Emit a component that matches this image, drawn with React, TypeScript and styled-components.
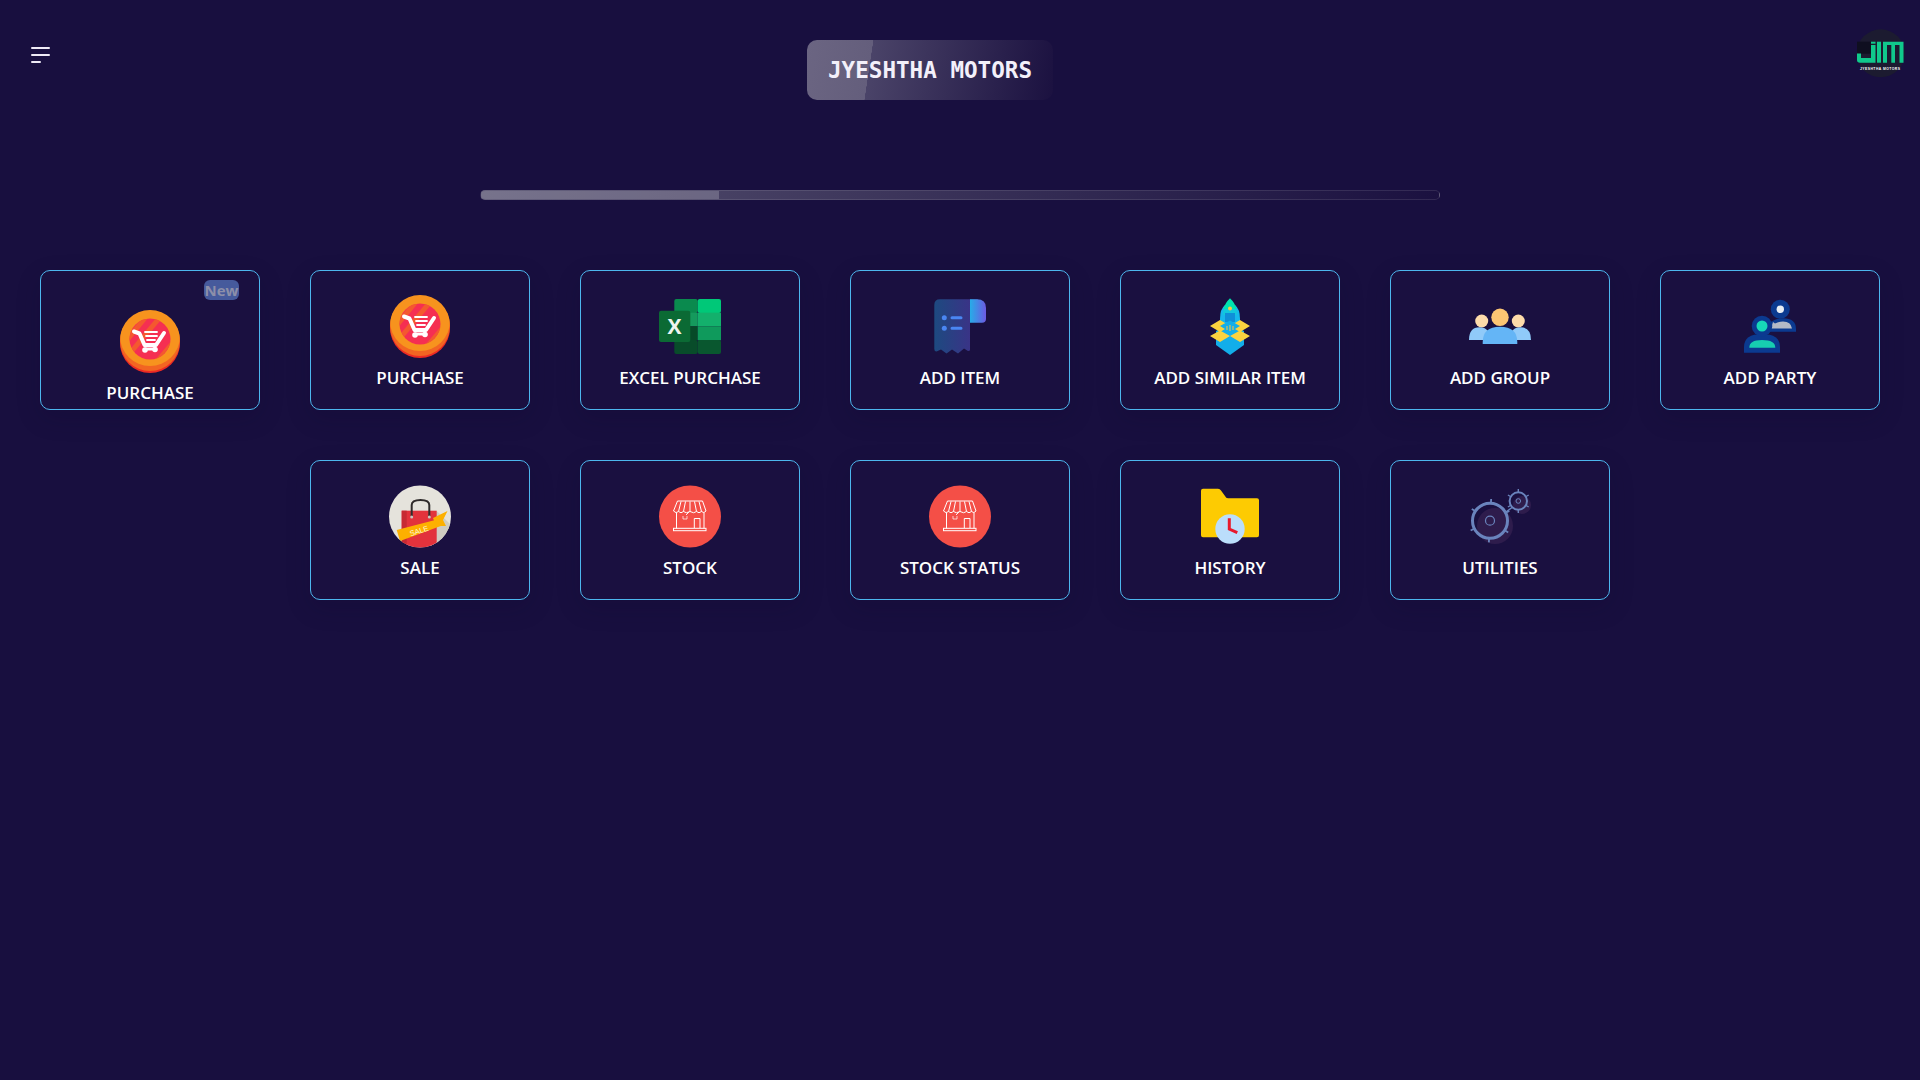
import React from "react";
import styled, { createGlobalStyle } from "styled-components";

const GlobalStyle = createGlobalStyle`
  html, body {
    margin: 0;
    padding: 0;
    background: #180f3f;
  }
  * {
    box-sizing: border-box;
  }
`;

const Page = styled.div`
  width: 100%;
  min-height: 1080px;
  background: #180f3f;
  font-family: "Open Sans", "Noto Sans", sans-serif;
  overflow: hidden;
`;

const Header = styled.header`
  display: flex;
  align-items: flex-start;
  height: 100px;
  padding: 27px 14px 0 31px;
`;

const MenuButton = styled.button`
  display: flex;
  flex-direction: column;
  gap: 5px;
  width: 19px;
  margin-top: 20px;
  padding: 0;
  border: 0;
  background: none;
`;

const MenuLine = styled.span<{ $short?: boolean }>`
  display: block;
  height: 2px;
  width: ${({ $short }) => ($short ? "10px" : "19px")};
  background: #eeeaf6;
  border-radius: 1px;
`;

const Title = styled.h1`
  width: 246px;
  height: 60px;
  margin: 13px 0 0 757px;
  border-radius: 10px;
  background: linear-gradient(98.5deg, #6b6582 0, #645e7c 26%, #4a4368 26.1%, #1b1140 100%);
  color: #f3f0fa;
  font-family: "DejaVu Sans Mono", "Liberation Mono", monospace;
  font-size: 22.6px;
  font-weight: 700;
  line-height: 60px;
  text-align: center;
`;

const LogoWrap = styled.div`
  margin-left: auto;
  width: 50px;
  height: 52px;
`;

const ProgressTrack = styled.div`
  width: 960px;
  height: 10px;
  margin: 90px auto 0;
  border: 1px solid rgba(255, 255, 255, 0.1);
  border-radius: 5px;
  background: linear-gradient(90deg, #55506f 0, #1b1140 100%);
  overflow: hidden;
`;

const ProgressFill = styled.div<{ $value: number }>`
  width: ${({ $value }) => $value}%;
  height: 100%;
  background: rgba(255, 255, 255, 0.2);
`;

const Tiles = styled.main`
  display: flex;
  flex-direction: column;
  gap: 50px;
  margin-top: 70px;
`;

const TileRow = styled.div`
  display: flex;
  justify-content: center;
  gap: 50px;
`;

const Tile = styled.a<{ $badged?: boolean }>`
  position: relative;
  display: flex;
  flex-direction: column;
  align-items: center;
  width: 220px;
  height: 140px;
  padding-top: ${({ $badged }) => ($badged ? "39px" : "24px")};
  border: 1px solid #4db7ee;
  border-radius: 10px;
  background: #1a1040;
  box-shadow: 0 8px 24px rgba(14, 8, 44, 0.18);
`;

const IconBox = styled.div`
  width: 62px;
  height: 63px;
  svg {
    display: block;
  }
`;

const TileLabel = styled.span`
  margin-top: 8px;
  color: #fff;
  font-size: 17px;
  font-weight: 600;
  line-height: 24px;
  white-space: nowrap;
`;

const NewBadge = styled.span`
  position: absolute;
  top: 9px;
  right: 20px;
  width: 35px;
  height: 20px;
  border-radius: 6px;
  background: #465a9c;
  color: #8d8fa9;
  font-size: 15px;
  font-weight: 700;
  line-height: 20px;
  text-align: center;
`;

const Svg = ({ children }: { children: React.ReactNode }) => (
  <svg width="62" height="63" viewBox="0 0 62 63">
    {children}
  </svg>
);

const CartIcon = () => (
  <Svg>
    <circle cx="31" cy="33" r="30" fill="#ed2a24" />
    <ellipse cx="31" cy="31" rx="30" ry="30" fill="#f26522" />
    <clipPath id="cartClip">
      <circle cx="31" cy="30" r="30" />
    </clipPath>
    <circle cx="31" cy="26" r="30" fill="#f7931e" clipPath="url(#cartClip)" />
    <clipPath id="cartInner">
      <circle cx="31" cy="29" r="20.5" />
    </clipPath>
    <circle cx="31" cy="29" r="20.5" fill="#f52f52" />
    <g clipPath="url(#cartInner)" stroke="#f4582f" strokeWidth="5">
      <path d="M8 30 L26 8 M12 42 L42 6" />
      <path d="M36 54 L58 28" />
    </g>
    <g fill="none" stroke="#fff" strokeLinecap="round" strokeLinejoin="round">
      <path d="M15 21.500 L20.500 23.500 L25.500 35 H37 L45 23" strokeWidth="4" />
      <path d="M26 22 H38" strokeWidth="1.800" />
      <path d="M27 26 H38" strokeWidth="1.800" />
      <path d="M28 30 H36" strokeWidth="1.800" />
      <path d="M26 39 H36" strokeWidth="3" />
    </g>
    <circle cx="26" cy="40" r="2.800" fill="#fff" />
    <circle cx="36" cy="39.500" r="2.800" fill="#fff" />
  </Svg>
);

const ExcelIcon = () => (
  <Svg>
    <g transform="translate(0 4)">
      <rect x="15.3" y="0" width="23.4" height="14" rx="2" fill="#0a8a4e" />
      <rect x="38.7" y="0" width="23.3" height="14" rx="2" fill="#00c878" />
      <rect x="15.3" y="13.7" width="23.4" height="13.6" fill="#159a5d" />
      <rect x="38.7" y="13.7" width="23.3" height="13.6" fill="#13b06c" />
      <rect x="15.3" y="27.3" width="23.4" height="14" fill="#064a28" />
      <rect x="38.7" y="27.3" width="23.3" height="14" fill="#0f9a5c" />
      <rect x="15.3" y="41" width="23.4" height="14" rx="2" fill="#084c2a" />
      <rect x="38.7" y="41" width="23.3" height="14" rx="2" fill="#09572f" />
      <rect x="0" y="11.7" width="31.3" height="31.3" rx="2" fill="#0b6a34" />
      <text x="15.6" y="35" fill="#eef5ef" fontFamily="Open Sans, sans-serif" fontSize="21" fontWeight="700" textAnchor="middle">
        X
      </text>
    </g>
  </Svg>
);

const ReceiptIcon = () => (
  <Svg>
    <defs>
      <linearGradient id="receiptBody" x1="0" x2="1" y1="0" y2="0">
        <stop offset="0" stopColor="#1d4a80" />
        <stop offset="1" stopColor="#402e88" />
      </linearGradient>
      <linearGradient id="receiptRoll" x1="0" x2="1" y1="0" y2="0">
        <stop offset="0" stopColor="#27ace8" />
        <stop offset="1" stopColor="#6c5ae2" />
      </linearGradient>
    </defs>
    <path
      d="M11 4.300 H49 V24 H41 V55 Q41 56 39 56 L35 53.500 L29 58.500 L23 54.500 L17.500 58.500 L12 54.500 L7.500 56.500 Q5.300 56.500 5.300 54 V10 Q5.300 4.300 11 4.300 Z"
      fill="url(#receiptBody)"
    />
    <path d="M41 4.300 H48 Q57 4.300 57 13 V24 Q57 27.700 53 27.700 H41 Z" fill="url(#receiptRoll)" />
    <circle cx="15.300" cy="22.700" r="2.500" fill="#4a86f2" />
    <circle cx="15.300" cy="33.300" r="2.500" fill="#4a86f2" />
    <path d="M23 22.700 H32 M23 33.300 H32" stroke="#4a86f2" strokeWidth="3" strokeLinecap="round" />
  </Svg>
);

const RocketBoxIcon = () => (
  <Svg>
    <path d="M17 36 L31 28 L45 36 V50 L31 60 L17 50 Z" fill="#12aeea" />
    <path d="M21 24 Q21 14 26 10 H36 Q41 14 41 24 V33 H21 Z" fill="#17b8ec" />
    <path d="M31 3.300 Q36 8 37.500 14 H24.500 Q26 8 31 3.300 Z" fill="#00e3ae" />
    <path d="M24.500 14 H37.500 L38 20 H24 Z" fill="#12c8dc" />
    <circle cx="31" cy="13.500" r="2" fill="#f6c945" />
    <rect x="26" y="18" width="10" height="9" fill="#0f8fd8" />
    <path d="M11 31 L21 25 L31 31 L21 37 Z M31 31 L41 25 L51 31 L41 37 Z" fill="#fbd33f" />
    <path d="M11 41 L21 35.500 L31 41 L21 47 Z M31 41 L41 35.500 L51 41 L41 47 Z" fill="#fbd33f" />
    <path d="M21 31 L31 25.500 L41 31 L31 37 Z" fill="#12aeea" />
    <path d="M28 31 V35 M31 30 V36 M34 31 V35" stroke="#e9c24a" strokeWidth="1.100" />
  </Svg>
);

const GroupIcon = () => (
  <Svg>
    <circle cx="12.700" cy="26" r="6.500" fill="#fedcaa" />
    <circle cx="49.300" cy="26" r="6.500" fill="#fedcaa" />
    <path d="M0 45 Q0 32.300 10.500 32.300 Q21 32.300 21 45 Z" fill="#90caf9" />
    <path d="M41 45 Q41 32.300 51.500 32.300 Q62 32.300 62 45 Z" fill="#90caf9" />
    <circle cx="31" cy="22.300" r="8.700" fill="#fcc573" />
    <path d="M13.700 49 V47 Q13.700 31.700 31 31.700 Q48.300 31.700 48.300 47 V49 Z" fill="#64b5f6" />
  </Svg>
);

const PartyIcon = () => (
  <Svg>
    <path d="M31 36.700 V28 Q36 23.300 44 23.300 Q57 23.300 57 34 V36.700 Z" fill="#0b3a90" />
    <path d="M32 33.500 L34 27 L36 28.500 Q40 26.500 44 26.500 Q52 26.500 53 33.500 Z" fill="#b4bac6" />
    <circle cx="41.300" cy="14.300" r="9.500" fill="#0b3a90" />
    <circle cx="41.300" cy="14.300" r="3.700" fill="#e8eef5" />
    <path d="M5 57.700 V52 Q5 39 23 39 Q41 39 41 52 V57.700 Z" fill="#0b3a90" />
    <path d="M10.300 52.700 Q10.300 45 23 45 Q36.300 45 36.300 52.700 Z" fill="#17cdb0" />
    <circle cx="23" cy="31" r="10.300" fill="#0b3a90" />
    <circle cx="23" cy="31" r="5.500" fill="#17d8b8" />
  </Svg>
);

const SaleIcon = () => (
  <Svg>
    <defs>
      <clipPath id="saleClip">
        <circle cx="31" cy="31.500" r="31" />
      </clipPath>
    </defs>
    <circle cx="31" cy="31.500" r="31" fill="#e5e3dc" />
    <g clipPath="url(#saleClip)">
      <path d="M47.700 26 L62 40 V63 H40 Z" fill="#cfccc1" />
      <rect x="12.700" y="25.700" width="35" height="40" fill="#e2323c" />
      <rect x="12.700" y="25.700" width="5" height="40" fill="#c72a33" />
      <path d="M22.700 31.700 V20 Q22.700 15 31.500 15 Q40.300 15 40.300 20 V31.700" fill="none" stroke="#2f2b2b" strokeWidth="2" />
      <circle cx="22.700" cy="32" r="1.500" fill="#c9c6c0" />
      <circle cx="40.300" cy="32" r="1.500" fill="#c9c6c0" />
      <path d="M58.500 26 L54 35 L57 41 L47 41 L44 33 Z" fill="#fdb000" />
      <path d="M7.700 45 L52 33.500 L54.500 40 L11 56 Z" fill="#fdb000" />
      <text x="30" y="48.500" fill="#fff6dc" fontFamily="Liberation Sans, sans-serif" fontSize="7.500" transform="rotate(-18 30 46)" textAnchor="middle">
        SALE
      </text>
    </g>
  </Svg>
);

const StoreIcon = () => (
  <Svg>
    <circle cx="31" cy="31.500" r="31" fill="#f44f47" />
    <g fill="none" stroke="#fff" strokeWidth="1">
      <path d="M18.500 16 H43.500 L47 26 Q45 29 42.500 26.500 Q40 29 37.500 26.500 Q35 29 31 26.500 Q27 29 24.500 26.500 Q22 29 19.500 26.500 Q17 29 14.500 26 Z" />
      <path d="M22 16.500 L19.500 26.500 M26.500 16.500 L24.500 26.500 M31 16.500 V26.500 M35.500 16.500 L37.500 26.500 M40 16.500 L42.500 26.500" />
      <path d="M17.500 28 V43.500 M45 28 V43.500" />
      <rect x="14.500" y="43.300" width="32.500" height="2.400" />
      <path d="M35.300 43 V33.500 H41 V43" />
      <path d="M27 30 L30 27" strokeWidth="0.900" />
      <path d="M24 31 V34 H28 V31" strokeWidth="0.700" />
    </g>
  </Svg>
);

const HistoryIcon = () => (
  <Svg>
    <path
      d="M4 3.700 H19 Q21 3.700 22 5.500 L26 11 Q27 13.300 29 13.300 H58 Q60 13.300 60 15.300 V50.300 Q60 52.300 58 52.300 H4 Q2 52.300 2 50.300 V5.700 Q2 3.700 4 3.700 Z"
      fill="#fdcb02"
    />
    <circle cx="31" cy="44" r="14.700" fill="#bbdefb" />
    <path d="M30.300 33.300 V44 L38.300 47.700" fill="none" stroke="#e8192c" strokeWidth="3" />
  </Svg>
);

const spokes = [0, 60, 120, 180, 240, 300];

const GearsIcon = () => (
  <Svg>
    <circle cx="26" cy="41" r="18" fill="#2e1c4c" />
    <circle cx="53" cy="20" r="9" fill="#2e1c4c" />
    <g fill="none" stroke="#6a84bd">
      <circle cx="21" cy="35.700" r="17.500" strokeWidth="3" />
      <circle cx="21" cy="35.700" r="4.500" strokeWidth="1.200" />
      {spokes.map((a) => (
        <path key={a} d="M21 14 V19" strokeWidth="1.800" transform={`rotate(${a + 3} 21 35.700)`} />
      ))}
      <path d="M37 27 L43 22.500" strokeWidth="1.500" />
      <circle cx="49.300" cy="16" r="8.700" strokeWidth="2" />
      <circle cx="49.300" cy="16" r="2.300" strokeWidth="1" />
      {spokes.map((a) => (
        <path key={a} d="M49.300 4 V7" strokeWidth="1.400" transform={`rotate(${a} 49.300 16)`} />
      ))}
    </g>
  </Svg>
);

const Logo = () => (
  <svg width="50" height="52" viewBox="0 0 50 52">
    <circle cx="24.700" cy="26.300" r="24" fill="#1c1b30" />
    <rect x="1" y="14.700" width="14" height="12" fill="#0f0f20" />
    <g fill="#10c98c">
      <path d="M1 26.500 H5 V31 H15 V18 H19.500 V35.700 H4 Q1 35.700 1 33 Z" />
      <rect x="15" y="14.700" width="4.500" height="2" />
      <path d="M21 14.700 H25 V35.700 H21 Z" />
      <path d="M27 14.700 H47.500 V35.700 H43.500 V18 H39 V35.700 H35.300 V18 H31 V35.700 H27 Z" />
    </g>
    <text x="4" y="43" fill="#fff" fontFamily="Liberation Sans, sans-serif" fontSize="3.400" fontWeight="700" textLength="40">
      JYESHTHA MOTORS
    </text>
  </svg>
);

type TileItem = { label: string; icon: React.ReactNode; badged?: boolean };

const firstRow: TileItem[] = [
  { label: "PURCHASE", icon: <CartIcon />, badged: true },
  { label: "PURCHASE", icon: <CartIcon /> },
  { label: "EXCEL PURCHASE", icon: <ExcelIcon /> },
  { label: "ADD ITEM", icon: <ReceiptIcon /> },
  { label: "ADD SIMILAR ITEM", icon: <RocketBoxIcon /> },
  { label: "ADD GROUP", icon: <GroupIcon /> },
  { label: "ADD PARTY", icon: <PartyIcon /> },
];

const secondRow: TileItem[] = [
  { label: "SALE", icon: <SaleIcon /> },
  { label: "STOCK", icon: <StoreIcon /> },
  { label: "STOCK STATUS", icon: <StoreIcon /> },
  { label: "HISTORY", icon: <HistoryIcon /> },
  { label: "UTILITIES", icon: <GearsIcon /> },
];

const renderTile = (item: TileItem, i: number) => (
  <Tile key={i} $badged={item.badged}>
    {item.badged && <NewBadge>New</NewBadge>}
    <IconBox>{item.icon}</IconBox>
    <TileLabel>{item.label}</TileLabel>
  </Tile>
);

export default function App() {
  return (
    <Page>
      <GlobalStyle />
      <Header>
        <MenuButton aria-label="menu">
          <MenuLine />
          <MenuLine />
          <MenuLine $short />
        </MenuButton>
        <Title>JYESHTHA MOTORS</Title>
        <LogoWrap>
          <Logo />
        </LogoWrap>
      </Header>
      <ProgressTrack>
        <ProgressFill $value={24.8} />
      </ProgressTrack>
      <Tiles>
        <TileRow>{firstRow.map(renderTile)}</TileRow>
        <TileRow>{secondRow.map(renderTile)}</TileRow>
      </Tiles>
    </Page>
  );
}
